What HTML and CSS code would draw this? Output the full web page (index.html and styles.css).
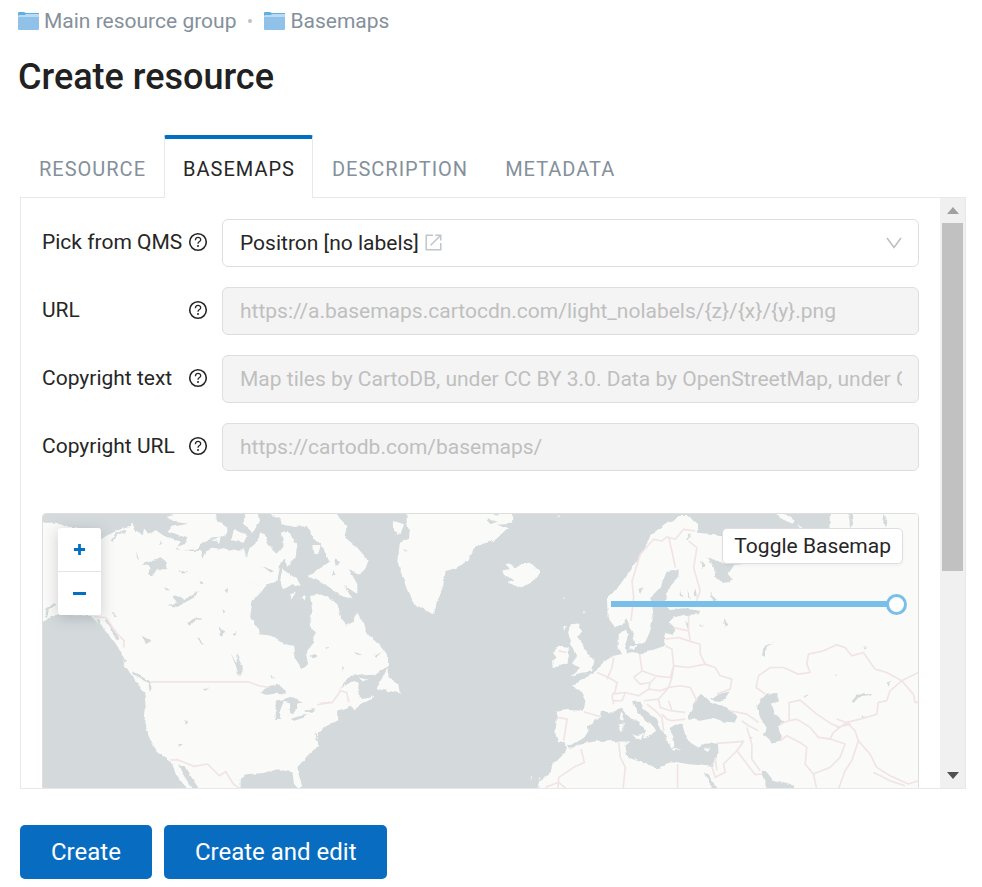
FILE: index.html
```html
<!DOCTYPE html>
<html lang="en">
<head>
<meta charset="utf-8">
<meta name="viewport" content="width=device-width, initial-scale=1">
<title>Create resource</title>
<link rel="stylesheet" href="styles.css">
</head>
<body>
<svg class="defs" aria-hidden="true">
  <symbol id="folder" viewBox="0 0 21 18">
    <path fill="#62aee0" d="M0 1q0-1 1-1h5l2 1h13v4H0z"/>
    <path fill="#b9dbf3" d="M1 3h6l1-1h13v3H0V4z"/>
    <path fill="#8fc1e9" d="M0 5h21v12q0 1-1 1H1q-1 0-1-1z"/>
  </symbol>
  <symbol id="help" viewBox="0 0 20 20">
    <circle cx="10" cy="10" r="8.3" fill="none" stroke="currentColor" stroke-width="1.6"/>
    <path d="M7.4 8.2C7.4 4.6 12.7 4.7 12.7 7.7 12.7 9.6 10 9.6 10 11.8" fill="none" stroke="currentColor" stroke-width="1.3"/>
    <circle cx="10" cy="14" r="1" fill="currentColor"/>
  </symbol>
</svg>
<main class="page">
  <nav class="crumbs" aria-label="Breadcrumb">
    <a href="#main"><svg class="folder"><use href="#folder"/></svg>Main resource group</a>
    <span class="dot"></span>
    <a href="#basemaps"><svg class="folder"><use href="#folder"/></svg>Basemaps</a>
  </nav>
  <h1>Create resource</h1>
  <div class="tabs" role="tablist">
    <button class="tab" type="button" role="tab" aria-selected="false">RESOURCE</button>
    <button class="tab active" type="button" role="tab" aria-selected="true">BASEMAPS</button>
    <button class="tab" type="button" role="tab" aria-selected="false">DESCRIPTION</button>
    <button class="tab" type="button" role="tab" aria-selected="false">METADATA</button>
  </div>
  <section class="panel" role="tabpanel">
    <form class="form">
      <div class="row">
        <label for="qms">Pick from QMS<svg class="help"><use href="#help"/></svg></label>
        <div class="picker">
          <select id="qms"><option>Positron [no labels]</option></select>
          <svg class="external" viewBox="0 0 18 18" fill="none" stroke="#bfc6cc" stroke-width="1.6"><path d="M8.5 1.3H1.3v15.4h15.4V9.5M11 1.3h5.7V7M16.2 1.8 6 12"/></svg>
          <svg class="chevron" viewBox="0 0 16 12" fill="none" stroke="#bfbfbf" stroke-width="1.6"><path d="M1 1l7 9.5L15 1"/></svg>
        </div>
      </div>
      <div class="row">
        <label for="url">URL<svg class="help"><use href="#help"/></svg></label>
        <input id="url" type="text" disabled value="https://a.basemaps.cartocdn.com/light_nolabels/{z}/{x}/{y}.png">
      </div>
      <div class="row">
        <label for="ctext">Copyright text<svg class="help"><use href="#help"/></svg></label>
        <input id="ctext" type="text" disabled value="Map tiles by CartoDB, under CC BY 3.0. Data by OpenStreetMap, under ODbL.">
      </div>
      <div class="row">
        <label for="curl">Copyright URL<svg class="help"><use href="#help"/></svg></label>
        <input id="curl" type="text" disabled value="https://cartodb.com/basemaps/">
      </div>
      <div class="map">
        <svg class="tiles" viewBox="0 0 876 276" aria-label="World map">
          <defs>
            <filter id="coast" x="0" y="0" width="100%" height="100%" color-interpolation-filters="sRGB">
              <feTurbulence type="fractalNoise" baseFrequency="0.14" numOctaves="2" seed="4" result="n"/>
              <feDisplacementMap in="SourceGraphic" in2="n" scale="4" xChannelSelector="R" yChannelSelector="G"/>
            </filter>
          </defs>
          <g filter="url(#coast)">
          <rect x="-20" y="-20" width="920" height="320" fill="#d4dadc"/>
          <!-- North America, west -->
          <g transform="translate(-12 -13) scale(.33333)">
            <g fill="#fafaf8">
              <path d="M20 65 75 65 100 75 140 80 165 90 210 115 225 105 245 95 270 85 298 77 303 62 315 92 335 103 340 82 352 98 375 88 400 105 430 118 450 120 435 145 480 150 512 150 518 175 526 150 545 140 600 148 640 145 648 170 656 140 680 120 690 95 702 100 710 125 735 160 745 150 760 130 778 140 770 165 750 185 745 210 740 240 710 250 690 275 665 300 658 350 680 380 685 400 720 405 760 430 790 435 795 475 815 505 832 490 825 455 850 425 852 395 835 370 845 330 838 285 870 280 910 300 920 660 878 680 862 690 862 735 830 765 800 800 805 825 815 855 805 866 790 850 785 815 740 806 710 815 690 818 650 820 630 835 628 900 510 900 495 850 460 795 442 790 450 810 485 866 500 900 470 866 435 820 418 780 380 755 355 710 340 665 345 620 340 575 325 555 300 520 280 490 262 440 230 395 180 345 130 343 85 340 60 345 45 358 20 370Z"/>
              <path d="M405 45 470 30 552 30 560 60 590 80 583 108 545 112 510 130 500 145 450 148 435 138 462 130 470 112 410 90 420 78 472 68 430 62Z"/>
              <path d="M640 30 680 30 685 65 665 95 640 70Z M610 85 650 105 640 125 600 118Z M545 118 570 108 565 125Z"/>
              <path d="M700 30 920 30 920 180 895 180 880 145 850 110 828 75 790 78 750 70 745 50Z"/>
              <path d="M750 95 770 90 800 130 795 165 775 195 760 180 755 205 800 235 810 255 785 250 760 265 748 240 765 155Z M845 135 870 135 862 160 848 158Z M830 225 890 200 910 220 910 265 860 240Z M775 280 795 275 782 295Z M812 290 825 285 822 302Z"/>
            </g>
            <g fill="#d4dadc">
              <path d="M332 190 372 178 388 168 410 185 405 205 378 205 365 225 350 215 362 198Z M412 314 440 305 425 288 432 282 460 297 505 270 490 290 465 303 440 318Z M470 362 490 352 518 352 495 360 475 375Z M600 455 610 480 622 520 634 522 636 500 615 455 620 490Z M565 380 580 388 572 412 566 400Z M688 580 705 560 738 548 765 570 765 582 735 578 710 582Z M735 600 760 595 780 588 815 605 800 612 790 638 778 640 778 605 760 600 748 630 748 655 735 655Z M780 655 800 648 830 640 820 650 790 660Z M820 630 858 620 855 632 825 634Z M442 205 470 216 455 218Z M695 195 730 210 720 215Z M578 265 592 260 590 278Z M640 240 700 258 675 250Z M400 258 415 268 405 268Z M840 460 872 462 845 472Z"/>
              <path d="M316 150 324 178 318 172Z M388 118 394 130 388 132Z M245 330 258 345 250 345Z M335 405 362 420 345 430Z M502 410 520 430 508 425Z M575 325 584 332 578 338Z M605 400 622 392 612 405Z M460 658 472 662 468 672Z M442 730 456 730 446 738Z M515 566 535 560 525 570Z M720 520 730 535 722 535Z M502 240 525 245 515 250Z M850 690 868 725 855 715Z"/>
            </g>
            <g fill="none" stroke="#d4dadc" stroke-width="7"><path d="M200 355 245 430 285 485M225 355 262 420M250 450 265 490M305 515 355 545 360 572M242 118 258 98 285 90M45 350 50 325 70 312"/></g>
          </g>
          <!-- Eastern Canada, Greenland and the Atlantic -->
          <g transform="translate(278 -13) scale(.33333)">
            <g fill="#fafaf8">
              <path d="M-30 30 35 30 80 75 72 108 110 140 145 180 122 220 85 205 110 250 110 280 70 252 95 295 50 280 10 235 -20 215 30 180 25 150 -30 100Z"/>
              <path d="M-10 290 20 285 50 310 60 345 75 375 95 365 110 335 130 370 145 405 185 440 205 470 205 495 160 522 90 525 50 572 65 558 95 540 115 545 110 580 125 595 150 590 155 578 160 592 125 608 100 628 90 615 50 630 45 650 50 657 10 675 0 695 -20 700Z"/>
              <path d="M200 500 205 530 232 545 238 578 215 572 168 565 185 530Z M115 530 140 537 125 542Z"/>
              <path d="M258 30 500 30 530 45 545 30 575 30 575 65 530 68 565 82 520 120 480 130 462 140 440 180 405 202 375 210 368 255 350 300 340 342 320 330 310 320 288 320 265 280 248 235 230 180 238 125 262 115 265 90 258 60Z M220 60 250 70 240 102 220 90Z"/>
              <path d="M545 208 570 205 555 190 568 185 582 202 600 190 630 185 658 212 640 240 602 262 562 245 578 235 552 222Z"/>
              <path d="M748 370 772 368 785 392 770 410 785 430 800 460 822 478 815 512 782 516 750 526 778 502 755 488 770 465 758 440 742 405Z M715 435 742 438 742 485 700 502 698 480 708 470 698 455Z M728 378 736 375 732 390Z M788 328 794 335 790 340Z M728 288 734 290 730 294Z M710 48 720 42 715 52Z M832 684 842 684 838 690Z"/>
            </g>
            <path fill="#d4dadc" d="M40 170 62 185 45 195Z M35 205 48 225 38 225Z M100 455 125 458 110 462Z M158 468 185 452 165 470Z M65 495 74 505 66 512Z M10 438 30 435 15 442Z M500 55 530 62 510 70Z M250 145 260 150 252 152Z M70 325 78 328 72 335Z"/>
          </g>
          <!-- Europe, north Africa and Asia -->
          <g transform="translate(558 -13) scale(.33333)">
            <g fill="#fafaf8">
              <path d="M1000 20 690 20 688 85 640 95 430 150 425 190 402 192 385 218 398 235 370 250 345 225 340 195 318 168 345 182 372 185 410 190 372 110 345 100 290 95 295 70 262 45 235 45 200 70 150 105 130 150 95 200 60 250 20 295 22 350 45 380 65 370 78 352 95 390 105 430 135 425 150 390 160 340 150 290 180 260 200 210 235 205 235 225 200 270 192 310 210 328 250 322 300 330 295 340 250 342 220 350 205 365 225 385 215 402 195 395 195 435 150 450 120 460 80 455 75 430 85 400 75 385 55 400 55 440 65 460 40 465 15 480 0 500 -20 515 -50 535 -85 555 -60 570 -45 600 -50 630 -100 628 -130 632 -135 700 -128 720 -105 725 -100 750 -140 790 -150 815 -180 840 -200 900 1000 900Z"/>
              <path d="M525 30 560 42 585 60 580 68 535 50Z M590 68 612 85 600 82Z M90 435 108 432 100 450 85 445Z M-212 830 -206 832 -210 838Z M-185 832 -180 830 -184 838Z"/>
            </g>
            <g fill="#d4dadc">
              <path d="M-98 737 -70 724 -50 712 -35 690 -38 675 0 650 5 632 40 635 60 620 82 645 115 665 138 690 128 712 145 705 168 690 145 665 110 635 98 600 120 600 130 625 170 655 185 690 200 712 208 740 222 738 220 710 208 682 225 672 245 668 255 702 270 725 295 740 315 728 350 728 352 755 335 798 260 790 215 782 175 807 140 790 80 765 75 735 90 722 60 722 0 720 -60 728 -90 745Z"/>
              <path d="M265 655 268 635 285 600 305 580 322 590 330 608 350 608 375 620 412 645 405 665 370 662 340 652 300 660Z M332 597 360 578 388 573 370 600 350 600Z M468 612 500 578 535 577 535 602 512 608 525 640 552 662 535 678 545 720 515 725 488 702 500 682 480 650Z M480 810 500 815 520 840 580 855 575 880 510 880Z M313 813 330 830 360 880 335 866Z"/>
              <path d="M742 30 758 40 762 70 750 85 748 55Z M850 38 862 60 858 78 848 60Z M255 360 266 365 262 385Z M330 270 350 300 340 305Z M370 355 385 372 375 378Z M300 180 315 190 305 205Z M240 265 250 290 242 285Z M262 268 272 295 264 292Z M285 262 290 285 280 280Z M755 600 765 582 815 580 812 586 775 590 762 605Z M785 645 805 645 792 652Z M485 465 490 440 525 425 500 440 495 465Z M702 518 710 518 706 526Z M860 545 870 540 866 560Z M610 585 625 585 615 590Z M265 105 272 98 270 115 258 118Z M115 265 130 260 118 280Z M790 440 802 440 795 446Z M300 372 308 372 302 378Z M445 705 458 712 450 715Z"/>
            </g>
            <path fill="#fafaf8" d="M62 632 68 640 66 660 58 655Z M55 668 70 665 68 695 58 695Z M95 705 128 700 122 718Z M215 742 245 744 220 750Z M310 745 332 740 320 752Z"/>
          </g>
          </g>
          <!-- Country borders -->
          <g fill="none" stroke="#f1e4e4" stroke-width="5" stroke-linejoin="round">
            <path transform="translate(-12 -13) scale(.33333)" d="M190 348 225 350 260 400 280 420 278 440M360 543H652L685 555 715 560M418 778 440 777 490 797 530 790 565 825 585 813 608 850 630 866M860 612 900 605"/>
            <path transform="translate(278 -13) scale(.33333)" d="M0 608 35 605 60 570 78 575 85 605M715 450 738 455"/>
            <g transform="translate(558 -13) scale(.33333)">
              <path d="M92 360 100 290 95 240 120 160 160 115 185 120 200 108 225 115 250 85 285 90M205 108 215 150 225 200M265 120 290 140 280 200 300 270 285 310"/>
              <path d="M118 460 125 510 165 525 210 530 220 495 215 445 195 435M195 415 235 410 265 420 300 430 300 460 315 490 265 500 222 495M265 345 265 390 270 420M220 380 265 390M315 490 345 500 360 525 395 535 390 565 350 580M220 500 215 530 205 560 240 555 270 560 290 600M100 530 125 510M100 530 120 550 150 545 165 530M150 545 145 565 180 570 205 560M35 580 75 575 115 585 145 565M75 575 65 600 40 600M130 600 175 595 205 560M175 595 180 620 210 630 255 635M140 610 165 630 185 650 190 690M185 640 200 655 215 660 255 655M205 600 215 630M-10 515 25 530 50 545 45 570 35 585 40 610M20 535 35 500 40 470M-50 633 0 648M-128 650 -100 655 -110 720"/>
              <path d="M55 722 60 770 75 800 68 866M232 790 232 866M-58 745 -48 785 -80 800 -125 830 -128 866M335 798 345 830 375 815 370 790 410 750 430 722 350 728M410 750 465 822 485 820M390 630 440 640 475 665M425 660 445 675 475 690M440 680 455 730 455 775 480 810M540 720 560 705 600 725 620 740 615 790 640 820 690 800 720 770 735 730 690 715 655 710 630 680 590 655 567 660 567 605 600 598 650 640 695 670 720 680 700 695 690 715M720 680 740 665 800 650 830 640 835 605 860 600 870 570 905 540 955 515M905 540 940 580 945 605 957 605M905 540 860 515 825 505 790 455 755 465 735 440 710 432 670 450 625 460 620 490 630 515 595 520 550 500 510 500 475 525 468 560 495 580M567 660 540 670M740 665 765 690 775 720 810 760 830 800 870 825 925 850 957 840M775 720 755 780 735 810 715 866M640 820 650 866M820 815 870 840 915 855M710 655 750 670 710 680M345 770 350 810M-165 860 -125 845 -100 866"/>
            </g>
          </g>
        </svg>
        <div class="zoom">
          <button type="button" aria-label="Zoom in"><svg viewBox="0 0 14 14"><path d="M1 7h12M7 1v12"/></svg></button>
          <button type="button" aria-label="Zoom out"><svg viewBox="0 0 14 14"><path d="M0 7h14"/></svg></button>
        </div>
        <div class="overlay">
          <button class="toggle" type="button">Toggle Basemap</button>
          <input class="opacity" type="range" min="0" max="100" value="100" aria-label="Opacity">
        </div>
      </div>
    </form>
    <div class="scrollbar" aria-hidden="true">
      <svg viewBox="0 0 12 7"><path fill="#a0a0a0" d="M0 7 6 0l6 7z"/></svg>
      <div class="track"><div class="thumb"></div></div>
      <svg viewBox="0 0 12 7"><path fill="#505050" d="M0 0h12L6 7z"/></svg>
    </div>
  </section>
  <div class="actions">
    <button type="button">Create</button>
    <button type="button">Create and edit</button>
  </div>
</main>
</body>
</html>
```
FILE: styles.css
```css
* {
  box-sizing: border-box;
}

body {
  margin: 0;
  background: #fff;
  color: #262626;
  font: 21px/28px Roboto, "Liberation Sans", sans-serif;
}

button,
input,
select {
  margin: 0;
  font: inherit;
  color: inherit;
}

.defs {
  position: absolute;
  width: 0;
  height: 0;
}

.page {
  display: flex;
  flex-direction: column;
  height: 100vh;
  padding: 7px 16px 8px 20px;
}

.crumbs {
  display: flex;
  align-items: center;
  margin-left: -2px;
}

.crumbs a {
  display: flex;
  align-items: center;
  gap: 5px;
  color: #84909b;
  text-decoration: none;
}

.folder {
  width: 21px;
  height: 18px;
}

.dot {
  width: 4px;
  height: 4px;
  margin: 0 12px;
  border-radius: 50%;
  background: #bcc2c7;
}

h1 {
  margin: 18px 0 34px -2px;
  font-size: 36px;
  line-height: 48px;
  font-weight: 500;
  color: #212121;
}

.tabs {
  display: flex;
  margin-bottom: -1px;
}

.tab {
  height: 63px;
  padding: 4px 17px 0 18px;
  border: 1px solid transparent;
  border-bottom: 0;
  background: none;
  color: #84909b;
  font-size: 20px;
  letter-spacing: 1px;
}

.tab.active {
  position: relative;
  padding-top: 1px;
  border-color: #e8e8e8;
  border-top: 4px solid #0070c5;
  border-radius: 2px 2px 0 0;
  background: #fff;
  color: #262626;
}

.panel {
  display: flex;
  flex: 1;
  min-height: 0;
  overflow: hidden;
  border: 1px solid #e8e8e8;
}

.form {
  display: flex;
  flex: 1;
  flex-direction: column;
  gap: 20px;
  min-width: 0;
  padding: 21px;
}

.row {
  display: grid;
  flex: none;
  grid-template-columns: 166px 1fr;
  column-gap: 14px;
  align-items: center;
}

.row label {
  display: flex;
  align-items: center;
  justify-content: space-between;
  padding-bottom: 2px;
  white-space: nowrap;
}

.help {
  width: 20px;
  height: 20px;
}

.picker {
  position: relative;
}

.row input,
.picker select {
  display: block;
  width: 100%;
  height: 48px;
  padding: 0 16px 0 17px;
  border: 1px solid #dedede;
  border-radius: 6px;
  background: #fff;
}

.picker select {
  appearance: none;
}

.row input:disabled {
  background: #f4f4f4;
  color: #bfbfbf;
}

.external {
  position: absolute;
  top: 15px;
  left: 203px;
  width: 17px;
  height: 17px;
}

.chevron {
  position: absolute;
  top: 18px;
  right: 17px;
  width: 16px;
  height: 12px;
}

.map {
  position: relative;
  flex: none;
  margin-top: 22px;
  overflow: hidden;
  border: 1px solid #dedede;
  border-radius: 4px;
}

.tiles {
  display: block;
  width: 100%;
}

.zoom {
  position: absolute;
  top: 14px;
  left: 15px;
  display: flex;
  flex-direction: column;
  gap: 1px;
  overflow: hidden;
  border-radius: 3px;
  background: #e4e4e4;
  box-shadow: 0 3px 14px rgba(60, 75, 85, .25);
}

.zoom button {
  display: grid;
  place-items: center;
  width: 43px;
  height: 43px;
  padding: 0;
  border: 0;
  background: #fff;
}

.zoom svg {
  width: 13px;
  height: 13px;
  stroke: #0070c5;
  stroke-width: 3;
}

.overlay {
  position: absolute;
  top: 14px;
  right: 11px;
  display: flex;
  flex-direction: column;
  align-items: flex-end;
  gap: 29px;
}

.toggle {
  height: 36px;
  margin-right: 4px;
  padding: 0 11px;
  border: 1px solid #dedede;
  border-radius: 5px;
  background: #fff;
  box-shadow: 0 2px 3px rgba(0, 0, 0, .04);
}

.opacity {
  width: 296px;
  height: 22px;
  appearance: none;
  background: linear-gradient(#78bfe9, #78bfe9) 0 50% / 280px 6px no-repeat;
}

.opacity::-webkit-slider-thumb {
  width: 21px;
  height: 21px;
  appearance: none;
  border: 3px solid #78bfe9;
  border-radius: 50%;
  background: #fff;
}

.scrollbar {
  display: flex;
  flex: none;
  flex-direction: column;
  align-items: center;
  gap: 9px;
  width: 25px;
  padding: 9px 2px;
  background: #f0f0f0;
}

.scrollbar svg {
  width: 12px;
  height: 7px;
}

.track {
  flex: 1;
  width: 21px;
}

.thumb {
  height: 64.5%;
  background: #c1c1c1;
}

.actions {
  display: flex;
  gap: 12px;
  margin-top: 36px;
}

.actions button {
  height: 54px;
  padding: 0 31px;
  border: 0;
  border-radius: 5px;
  background: #086dc1;
  color: #fff;
  font-size: 24px;
}
```
